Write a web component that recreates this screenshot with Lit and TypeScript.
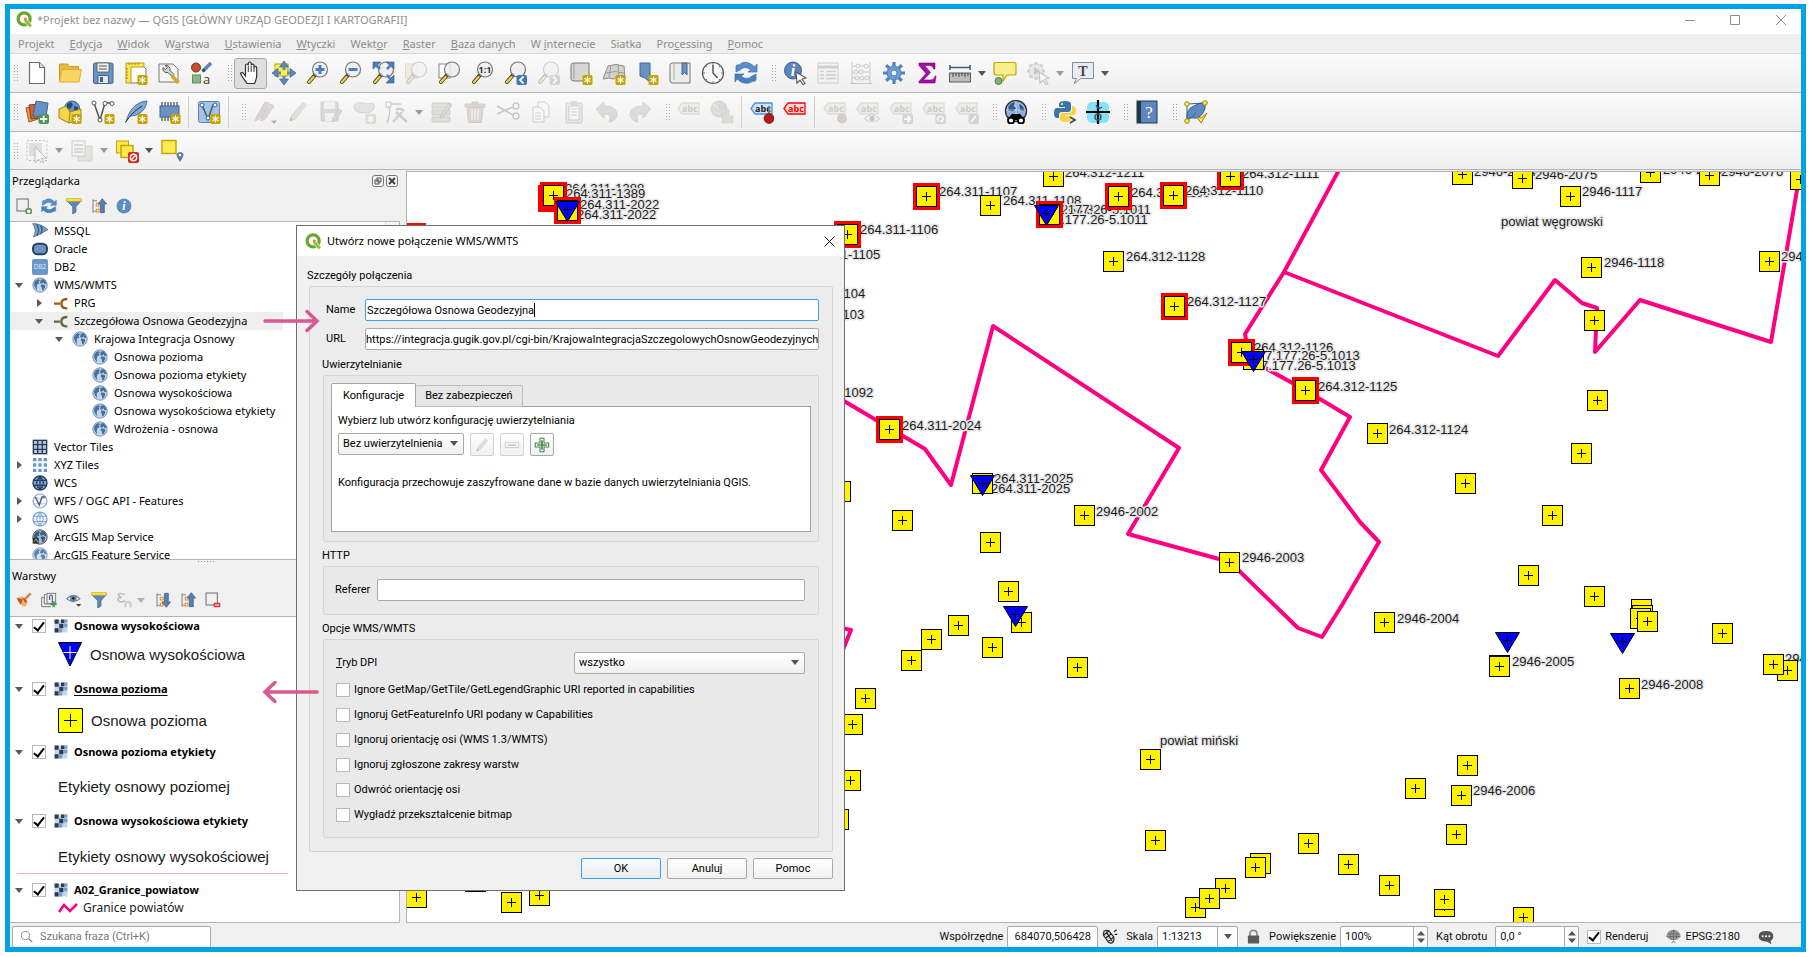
import { LitElement, html, svg, css, nothing, type TemplateResult } from "lit";
import { customElement, property } from "lit/decorators.js";
import { classMap } from "lit/directives/class-map.js";

/* ---------- shared icon fragments ---------- */

const badge = svg`<rect x="13.500" y="14" width="10" height="10" rx="1.500" fill="#c6a304"/>
  <path d="M18.500 15.500v7M15.500 17.200l6 3.600M21.500 17.200l-6 3.600" stroke="#fff" stroke-width="1.300"/>`;
const lens = (inner: unknown = nothing) => svg`
  <path d="M10 14 4 21" stroke="#3a3a3a" stroke-width="4" stroke-linecap="round"/>
  <path d="M8.500 16 4 21" stroke="#f2cf2c" stroke-width="2.400" stroke-linecap="round"/>
  <circle cx="15" cy="8.500" r="7.500" fill="#eeeeeecc" stroke="#777" stroke-width="1.200"/>${inner}`;
const tag = (fill = "#d9d9c2", line = "#a5a58f", ink = "#666") => svg`
  <path d="M1 8.500 5 3h17v11H5z" fill="${fill}" stroke="${line}" stroke-width="1.300"/>
  <text x="13" y="12" font-size="9" font-weight="700" font-family="Open Sans, sans-serif" text-anchor="middle" fill="${ink}">abc</text>`;
const smallBadge = (d: string, fill = "#8d8d8d") => svg`
  <rect x="13.500" y="14" width="10.500" height="10" rx="2" fill="${fill}"/><path d="${d}" stroke="#fff" stroke-width="1.800" fill="none"/>`;
const globe = (ocean: string, land: string, edge: string) => svg`
  <circle cx="12" cy="12" r="10.800" fill="${ocean}" stroke="${edge}" stroke-width="1.400"/>
  <path d="M3 9q2-5 7-6l2 2-2 2 1 3-3 1-1 4 1 5q-5-4-5-11zM13 4l4-1q4 3 5 7l-3 1-2-3-2 2-3-1zM14 11l5 1 1 3-3 5-2 0 0-4-2-2z" fill="${land}"/>`;
const pencil = svg`<path d="M4 21l1.500-5L17 2.500l3.500 2.500L9 19z" fill="#c9c48d" stroke="#77776b"/><path d="M17 2.500l3.500 2.500L9 19 6 17z" fill="#b3b092"/><path d="M4 21l1-3 2 1.500z" fill="#333"/>`;
const cursor = svg`<path d="M13 11l10 6-4 1 3 4.500-2 1.200-3-4.500-3 3z" fill="#fff" stroke="#555" stroke-width="1.100"/>`;

const ICONS: Record<string, TemplateResult<2>> = {
  new: svg`<path d="M4.500 1.500h10l5 5v16h-15z" fill="#fff" stroke="#6b6b6b" stroke-width="1.200"/><path d="M14.500 1.500v5h5" fill="#ddd" stroke="#6b6b6b"/>`,
  open: svg`<path d="M1.500 3h8l2 2.500h9V20h-19z" fill="#e9b93d" stroke="#c99a22"/><path d="M1.500 21 4 8.500h19.500L21 21z" fill="#fcd462" stroke="#e0b036"/>`,
  save: svg`<rect x="2.500" y="2" width="19.500" height="20.500" rx="1.500" fill="#6a93c4" stroke="#45678f"/><path d="M6 2h12v9H6z" fill="#f0f0f0" stroke="#555" stroke-width=".8"/><path d="M8 5h8M8 8h8" stroke="#555"/><path d="M7 14.500h10.500v8H7z" fill="#e8e8e8" stroke="#45678f"/><path d="M9 16h3v5H9z" fill="#3d5f8a"/>`,
  layout: svg`<path d="M6 4h12l4 4v14H6z" fill="#fff" stroke="#777"/><path d="M2 2h18v4H7v16H2z" fill="#fce94f" stroke="#c19a1f"/><path d="M5 2v2M8 2v2M11 2v2M14 2v2M2 8h2M2 11h2M2 14h2M2 17h2" stroke="#8f6f00" stroke-width=".8"/>${badge}`,
  wrench: svg`<path d="M2 3h14l5 5v13H2z" fill="#f5f5f5" stroke="#777"/><path d="M8 4.500a4 4 0 0 1 5 5l4 4-2 2-4-4a4 4 0 0 1-5-5l2.500 2 2-2z" fill="#d3d7cf" stroke="#555"/><path d="M15 15l6.500 7" stroke="#d8a827" stroke-width="3.500"/>`,
  style: svg`<circle cx="6" cy="6.500" r="4.500" fill="#c2522f" stroke="#7d2f16"/><path d="M13 10l8-8" stroke="#5a86b8" stroke-width="3.500"/><path d="M12.500 10.500l2-2" stroke="#26476d" stroke-width="2.500"/><rect x="2.500" y="14" width="8" height="8" fill="#8eb58c" stroke="#5f8c5d"/><text x="13" y="22.500" font-size="13" font-family="Open Sans, sans-serif" fill="#333">a</text>`,
  hand: svg`<path d="M8 22.500c-2-3-5-7-6.500-10 .7-1.500 2.600-1 3.500.5l1.500 2V4.500c0-2 2.700-2 2.800 0V2.500c0-2 2.800-2 2.900 0v2c0-1.800 2.700-1.800 2.800 0v2c.3-1.500 2.500-1.400 2.700.4V15c0 3-1.500 5-2 7.500z" fill="#fff" stroke="#333" stroke-width="1.200"/><path d="M9.300 5v6M12.200 5v6M15 6v5" stroke="#333"/>`,
  panAll: svg`<rect x="3" y="3" width="13" height="12" fill="#fcee50" stroke="#c4a000"/><path d="M12 0l4.500 6h-9zM12 24l4.500-6h-9zM0 12l6-4.500v9zM24 12l-6-4.500v9z" fill="#5b87bd" stroke="#3a628f" stroke-width=".7"/><path d="M12 5v4M12 15v4M5 12h4M15 12h4" stroke="#5b87bd" stroke-width="3"/>`,
  zoomIn: lens(svg`<path d="M15 4v9M10.500 8.500h9" stroke="#4a7dbb" stroke-width="3"/>`),
  zoomOut: lens(svg`<path d="M10.500 8.500h9" stroke="#4a7dbb" stroke-width="3"/>`),
  zoomFull: svg`${lens()}<path d="M2 1h8L2 8zM23 1h-8l8 7zM23 22v-8l-8 8z" fill="#4a7dbb" stroke="#33587f" stroke-width=".6"/><path d="M5 4l4 4M20 4l-4 4M20 19l-4-5" stroke="#4a7dbb" stroke-width="2.500"/>`,
  zoomSel: svg`<rect x="1.500" y="3" width="12" height="14" fill="#e6dc6b" stroke="#b0a64a"/>${lens()}`,
  zoomLayer: svg`<rect x="2" y="3" width="11" height="14" fill="#fff" stroke="#888"/>${lens()}`,
  zoom11: svg`${lens(svg`<text x="15" y="12" font-size="9" font-weight="700" font-family="Open Sans, sans-serif" text-anchor="middle" fill="#333">1:1</text>`)}`,
  zoomLast: svg`${lens()}${smallBadge("M20.500 15.500 17 19l3.500 3.500", "#4477ad")}`,
  zoomNext: svg`${lens()}${smallBadge("M17 15.500l3.500 3.500-3.500 3.500")}`,
  newMap: svg`<path d="M2 4.500q0-2.500 2.500-2.500H20v18H5q-3 0-3-2.500z" fill="#d7d7d2" stroke="#777"/><path d="M5 2v16" stroke="#999"/>${badge}`,
  new3d: svg`<path d="M1 18 6 5q8-3 16 0l1 12q-8-3-11 1-5-2-11 0z" fill="#d2d2ce" stroke="#8a8a86"/><path d="M4 12q9-3 18 0M9 4 7 16M16 4l1 12" stroke="#9b9b97" fill="none"/>${badge}`,
  bmNew: svg`<path d="M5 2h10v19l-5-4-5-2z" fill="#6a93c4" stroke="#3e6594"/>${badge}`,
  bms: svg`<path d="M2 4q0-2 2.500-2H22v20H5q-3 0-3-2z" fill="#ecece8" stroke="#777"/><path d="M6 2v17" stroke="#aaa"/><path d="M14 2h5v12l-2.500-2.500L14 14z" fill="#6a93c4" stroke="#3e6594"/>`,
  clock: svg`<circle cx="12" cy="12" r="10.500" fill="#fafafa" stroke="#555" stroke-width="1.200"/><path d="M12 4v8l4.500 5" stroke="#555" stroke-width="1.500" fill="none"/><path d="M12 2v2M12 20v2M2 12h2M20 12h2M5 5l1 1M19 5l-1 1M5 19l1-1M19 19l-1-1" stroke="#777"/>`,
  refresh: svg`<path d="M2 11V5q1-2 3-1Q10-1 17 3l4 3 2-3v8h-9l3-2q-6-5-11 0z" fill="#5a8fcb" stroke="#3d6ea5" stroke-width=".7"/><path d="M22 13v6q-1 2-3 1-5 4-12 1l-4-3-2 3v-8h9l-3 2q6 5 11 0z" fill="#4a80bf" stroke="#3d6ea5" stroke-width=".7"/>`,
  identify: svg`<circle cx="10" cy="9.500" r="8.500" fill="#5a86bd" stroke="#3a628f"/><text x="10" y="15" font-size="16" font-style="italic" font-weight="700" font-family="Liberation Serif, serif" text-anchor="middle" fill="#fff">i</text>${cursor}`,
  table: svg`<rect x="2" y="2" width="20" height="20" fill="#eee" stroke="#777"/><path d="M2 6h20" stroke="#777" stroke-width="3"/><path d="M4 10.500h4M10 10.500h10M4 14h4M10 14h10M4 17.500h4M10 17.500h10" stroke="#777" stroke-width="1.300"/>`,
  abacus: svg`<path d="M3 1v21M21 1v21M1 22.500h22M3 5h18M3 11h18M3 17h18" stroke="#666" fill="none"/><g fill="#eee" stroke="#666"><circle cx="9" cy="5" r="2"/><circle cx="17" cy="5" r="2"/><circle cx="7" cy="11" r="2"/><circle cx="12" cy="11" r="2"/><circle cx="8" cy="17" r="2"/><circle cx="13" cy="17" r="2"/><circle cx="18" cy="17" r="2"/></g>`,
  gear: svg`<path d="M12 1v22M1 12h22M4.200 4.200l15.600 15.600M19.800 4.200 4.200 19.800" stroke="#4f82bf" stroke-width="3.200"/><circle cx="12" cy="12" r="7" fill="#6d9bd1" stroke="#4f82bf"/><circle cx="12" cy="12" r="3" fill="#f4f4f4" stroke="#4f82bf"/>`,
  sigma: svg`<path d="M4 2h16v6h-1.500q-.5-3.500-4-3.500H9.500l6 7-7 7.500h7q4 0 4.500-4H21l-1 7H4v-1.500l7-8-7-8z" fill="#a50ba5" stroke="#7a057a" stroke-width=".6"/>`,
  ruler: svg`<path d="M2 4v5M22 4v5M2 6.500h20" stroke="#3a5f87" stroke-width="1.600"/><rect x="1.500" y="12" width="21" height="9" fill="#bdbdbd" stroke="#5c5c5c"/><path d="M5 12v4M8 12v3M11 12v4M14 12v3M17 12v4M20 12v3" stroke="#444"/>`,
  tip: svg`<path d="M3 1.500h18q2 0 2 2V12q0 2-2 2h-7l-4 6V14H3q-2 0-2-2V3.500q0-2 2-2z" fill="#f8ed8b" stroke="#c6a304" stroke-width="1.200"/><circle cx="5.500" cy="20" r="3.500" fill="#7fae7d" stroke="#4e7f4c"/>`,
  action: svg`<path d="M10 1v18M1 10h18M3.600 3.600l12.800 12.800M16.400 3.600 3.600 16.400" stroke="#777" stroke-width="3"/><circle cx="10" cy="10" r="7" fill="#ccc" stroke="#777"/><path d="M8 6l6 4-6 4z" fill="#555"/>${cursor}`,
  note: svg`<path d="M1.500 1.500h21v16H10l-7 5 2.500-5h-4z" fill="#e6edf2" stroke="#8a8f94"/><text x="12" y="14.500" font-size="14" font-family="Liberation Serif, serif" font-weight="700" text-anchor="middle" fill="#444">T</text>`,
  dataSrc: svg`<path d="M1 8l9-2 3 13-9 3z" fill="#e0a04a" stroke="#965e14"/><path d="M4 5l9-1 2 14-9 1z" fill="#cf5e3c" stroke="#8f3a1f"/><path d="M11 1l12 2-2 14-13-1z" fill="#6692c9" stroke="#3f6797"/>${smallBadge("M18.700 15.500v7M15.200 19h7", "#4f9457")}`,
  geopkg: svg`<circle cx="14" cy="8.500" r="7.500" fill="#6a93c4" stroke="#345a86"/><path d="M9 4l4-2 2 3-3 4-3-1zM16 6l4 1v4l-4-1z" fill="#254a75"/><path d="M1 9l7-3 4 6 11-3v10l-12 4L1 18z" fill="#f3d54a" stroke="#a58210"/><path d="M12 12l-1 11" stroke="#a58210"/>${badge}`,
  newShp: svg`<path d="M3 3l6 17L14 3h7" stroke="#555" stroke-width="1.500" fill="none"/><g fill="#fff" stroke="#555"><circle cx="3" cy="3" r="2"/><circle cx="9" cy="20" r="2"/><circle cx="14" cy="3.500" r="2"/><circle cx="21" cy="3.500" r="2"/></g>${badge}`,
  feather: svg`<path d="M2 22Q5 10 12 5q5-4 11-4-1 8-7 12-4 3-9 3" fill="#7ea6d6" stroke="#4a75a8"/><path d="M1.500 22.500Q8 12 18 6" stroke="#333" fill="none"/>${badge}`,
  memory: svg`<path d="M5 2v19M8 2v19M11 2v19M14 2v19M17 2v19M20 2v19" stroke="#222"/><rect x="3" y="6" width="19" height="11" fill="#6a93c4" stroke="#3a628f"/>${badge}`,
  virtual: svg`<rect x="1.500" y="1.500" width="21" height="21" rx="2" fill="#a8c3e2" stroke="#5b83b0"/><path d="M5 5l6 14 5-14h4" stroke="#3c5f88" stroke-width="1.600" fill="none"/><g fill="#fff" stroke="#3c5f88"><circle cx="5" cy="5" r="2"/><circle cx="11" cy="18" r="2"/><circle cx="18" cy="5" r="2"/></g>${badge}`,
  pencils: svg`<path d="M2 21l2-5L12 2l4 1L8 18z" fill="#a08f86" stroke="#777"/><path d="M8 21l1-4 8-13 4 2-9 13z" fill="#b08c86" stroke="#777"/><path d="M18 20.500h6L21 24z" fill="#222"/>`,
  pencil,
  saveEd: svg`<rect x="2" y="2" width="17" height="19" rx="1" fill="#9c9c9c" stroke="#777"/><path d="M5 2h11v7H5zM6 13h9v8H6z" fill="#e8e8e8"/><path d="M13 22l1-4 6-9 3 2-6 9z" fill="#b08c86" stroke="#777"/>`,
  addPoly: svg`<path d="M2 6q2-5 8-3t11 0q3 4 0 7t-7 3-8-1-4-6z" fill="#b9bfae" stroke="#888"/>${smallBadge("M18.500 15.500v7M15.500 17.200l6 3.600M21.500 17.200l-6 3.600", "#a8a070")}`,
  vertex: svg`<path d="M4 4h12M4 6q2 8-2 17" stroke="#666" stroke-width="1.400" fill="none"/><rect x="1" y="2" width="5" height="5" fill="#fff" stroke="#666"/><path d="M8 22l9-10M11 10q4-3 8 1M11 12l11 10" stroke="#777" stroke-width="2.500" fill="none"/>`,
  multiEd: svg`<path d="M2 3h18v5H2zM2 10h18v5H2zM2 17h18v5H2z" fill="#b5b58f" stroke="#777"/><path d="M10 18l1-4L19 3l3 2-8 11z" fill="#999" stroke="#666"/>`,
  trash: svg`<path d="M4 7h16l-1.500 15.500h-13zM2 4h20v3H2zM9 2h6v2H9z" fill="#b98f86" stroke="#8a6a64"/><path d="M9 9v11M12 9v11M15 9v11" stroke="#eee" stroke-width="1.300"/>`,
  cut: svg`<path d="M1 6l16 9M1 14l16-7" stroke="#666" stroke-width="1.800"/><circle cx="20" cy="6" r="3" fill="none" stroke="#666" stroke-width="1.600"/><circle cx="20" cy="16" r="3" fill="none" stroke="#666" stroke-width="1.600"/>`,
  copy: svg`<path d="M9 2h7l4 4v11H9z" fill="#fff" stroke="#777"/><path d="M4 7h7l4 4v11H4z" fill="#fff" stroke="#777"/><path d="M6 13h6M6 16h6M6 19h6" stroke="#777"/>`,
  paste: svg`<rect x="4" y="3" width="16" height="20" rx="1" fill="#ccc" stroke="#777"/><path d="M7 6h10v14H7z" fill="#fff" stroke="#777"/><path d="M9 1h6v4H9z" fill="#999"/><path d="M9 9h6M9 12h6M9 15h6" stroke="#777"/>`,
  undo: svg`<path d="M1 9l8-7v4q13 0 13 9-1 6-8 7 4-9-5-8v4z" fill="#c09a78" stroke="#9a7a5c"/>`,
  redo: svg`<path d="M23 9l-8-7v4Q2 6 2 15q1 6 8 7-4-9 5-8v4z" fill="#9aab94" stroke="#7c8c76"/>`,
  label: tag(),
  diagram: svg`<circle cx="9" cy="9" r="8" fill="#b9a08a" stroke="#888"/><path d="M9 9V1a8 8 0 0 1 8 8z" fill="#7c9a78"/><path d="M9 9 3 4" stroke="#eee"/><path d="M12 14h3v9h-3zM16 10h3v13h-3zM20 16h3v7h-3z" fill="#9fb39a" stroke="#777" stroke-width=".6"/>`,
  pinLabel: svg`${tag("#cfe3fa", "#4a90e2", "#222")}<path d="M19 6v12" stroke="#777" stroke-width="2"/><circle cx="19" cy="18.500" r="5" fill="#b01c1c" stroke="#7d1010" stroke-width=".7"/>`,
  redLabel: svg`${tag("#fdd", "#f00", "#f00")}`,
  pinLabel2: svg`${tag()}<circle cx="19" cy="18.500" r="5" fill="#a57070"/>`,
  eyeLabel: svg`${tag()}<path d="M8 18.500q7-7 16 0-8 7-16 0z" fill="#eee" stroke="#777"/><circle cx="16" cy="18.500" r="2.500" fill="#555"/>`,
  moveLabel: svg`${tag()}${smallBadge("M15 19h6M18.500 16l3 3-3 3")}`,
  rotLabel: svg`${tag()}${smallBadge("M16 21.500q-2-5 3-5 4 1 1 5l-2-1")}`,
  editLabel: svg`${tag()}${smallBadge("M16 22l5-6")}`,
  search: svg`<circle cx="12" cy="11" r="10.500" fill="#8bb0dc" stroke="#333" stroke-width="1.400"/><path d="M4 6q4-5 8-4l-2 4 3 2-4 4-5-1zM15 3q6 3 6 9l-5-1-1-4zM2 10h20M12 1v14" fill="#315a8c" stroke="#d6e3f2" stroke-width=".6"/><path d="M7 15q1-2 3-1h4q2-1 3 1l4 5H3z" fill="#000"/><circle cx="7" cy="20.500" r="3" fill="#fff" stroke="#000" stroke-width="1.800"/><circle cx="17" cy="20.500" r="3" fill="#fff" stroke="#000" stroke-width="1.800"/>`,
  python: svg`<path d="M12 1q-6 0-6 3v3h6v1H4q-3 0-3 5t3 5h2v-3q0-3 3-3h6q3 0 3-3V4q0-3-6-3z" fill="#3a75a8"/><path d="M12 22q6 0 6-3v-3h-6v-1h8q3 0 3-4t-3-5h-1v4q0 3-3 3h-6q-3 0-3 3v3q0 3 5 3z" fill="#fcd13f"/><circle cx="9" cy="4" r="1" fill="#fff"/><path d="M17 17l5 3-5 3" stroke="#444" stroke-width="1.600" fill="none"/>`,
  gugik: svg`<rect x="1" y="2" width="22" height="21" rx="5" fill="#84e3f6"/><path d="M12 0v24M0 12h24" stroke="#000" stroke-width="2.200"/><path d="M10 5q2 5 6 2M9 17q0-3 3-3t3 3-3 3-3-3z" stroke="#3a5a66" fill="none" stroke-width="1.500"/>`,
  help: svg`<rect x="2" y="1" width="20" height="22" fill="#5c88bd" stroke="#25364a"/><path d="M2 1h4v22H2z" fill="#25364a"/><text x="14" y="18" font-size="17" font-family="Liberation Serif, serif" text-anchor="middle" fill="#fff">?</text>`,
  topo: svg`<path d="M3 21Q2 8 10 6q6-4 11-3 1 6-2 10-4 6-9 5-5-1-7 3z" fill="#5e8bc2" stroke="#375f8f"/><path d="M3 4l18-1M3 4l0 17M3 21l9-8" stroke="#375f8f" fill="none"/><g fill="#fce94f" stroke="#9c8500"><circle cx="3" cy="4" r="2.300"/><circle cx="21" cy="3" r="2.300"/><circle cx="3" cy="21" r="2.300"/><path d="M13 17l4 6 6-10-6 5z"/></g>`,
  selRect: svg`<rect x="2" y="1.500" width="20" height="20" fill="none" stroke="#444" stroke-dasharray="2 2"/><rect x="4" y="4" width="13" height="13" fill="#b5b18f"/><path d="M10 8l11 11-5 .5 3 4-2 .8-3-4-4 3z" fill="#fff" stroke="#444"/>`,
  selForm: svg`<path d="M8 7h14v15H8z" fill="#c3bf96" stroke="#888"/><rect x="2" y="2" width="13" height="15" fill="#eee" stroke="#777"/><path d="M4 6h9M4 10h9M4 13h9" stroke="#777" stroke-width="1.500"/>`,
  desel: svg`<rect x="1.500" y="2" width="12" height="12" fill="#fce94f" stroke="#c4a000"/><rect x="6" y="6.500" width="12" height="12" fill="#fce94f" stroke="#c4a000" stroke-width="1.400"/><rect x="13" y="13" width="11" height="11" rx="2" fill="#d22"/><circle cx="18.500" cy="18.500" r="3.200" fill="none" stroke="#fff" stroke-width="1.400"/><path d="M16.500 20.500l4-4" stroke="#fff" stroke-width="1.400"/>`,
  selLoc: svg`<rect x="2" y="1.500" width="14" height="13" fill="#fcea4f" stroke="#c4a000" stroke-width="1.400"/><path d="M20 23q-4-6-3.500-8 3.500-4 7 0Q24 17 20 23z" fill="#5b7f97"/><circle cx="20" cy="16" r="1.300" fill="#fff"/>`,
  /* browser & layer panels */
  addLayer: svg`<rect x="1.500" y="1.500" width="17" height="18" fill="none" stroke="#777" stroke-width="1.600"/><circle cx="19" cy="20" r="4" fill="#f0f0f0" stroke="#5d9a60" stroke-width="2.500"/>`,
  filter: svg`<path d="M1 4h22l-8 9v8l-5 3V13z" fill="#5d87b8" stroke="#40658f"/><path d="M1 1h22v4H1z" fill="#fce94f" stroke="#c4a000"/>`,
  collapse: svg`<path d="M3 2v20M3 4h6M3 20h6" stroke="#888" stroke-width="1.600"/><path d="M8 8h4v4H8zM8 17h4v4H8z" fill="#fff" stroke="#ee8b1c" stroke-width="1.600"/><path d="M17 1l6.500 8H20v13h-6V9h-3.500z" fill="#5580b3" stroke="#33587f"/>`,
  expand: svg`<path d="M3 2v20M3 4h6M3 20h6" stroke="#888" stroke-width="1.600"/><path d="M8 8h4v4H8zM8 17h4v4H8z" fill="#fff" stroke="#ee8b1c" stroke-width="1.600"/><path d="M17 23l6.500-8H20V2h-6v13h-3.500z" fill="#5580b3" stroke="#33587f"/>`,
  info: svg`<circle cx="12" cy="12" r="10.500" fill="#5d8bc4" stroke="#3f6ba2"/><text x="12" y="18" font-size="18" font-style="italic" font-weight="700" font-family="Liberation Serif, serif" text-anchor="middle" fill="#fff">i</text>`,
  brush: svg`<path d="M13 11 22 2" stroke="#c98a4b" stroke-width="4"/><path d="M1 9l6-2 11 8-4 7Q5 21 1 9z" fill="#f0b050"/><path d="M1 9l9 2-3 8zM8 6l9 8-3 2z" fill="#d6452e"/>`,
  group: svg`<path d="M4 8H1v14h14M8 4H5v14h14" fill="none" stroke="#777" stroke-width="1.500"/><rect x="9" y="2" width="13" height="15" fill="#eee" stroke="#777" stroke-width="1.400"/><path d="M13 12V6q2-3 4 0v14" fill="none" stroke="#40658f" stroke-width="1.700"/><path d="M19 14v9M14.500 18.500h9" stroke="#4f9457" stroke-width="3"/>`,
  eye: svg`<path d="M1 10q10-10 20 0-10 9-20 0z" fill="#eee" stroke="#777" stroke-width="1.600"/><circle cx="11" cy="9.500" r="5" fill="#5d87b8"/><circle cx="11" cy="9.500" r="2" fill="#222"/><path d="M15 18h8l-4 4z" fill="#444"/>`,
  epsilon: svg`<path d="M13 4Q3 0 4 5q1 3 5 3-7 0-6 4 1 5 11 1" fill="none" stroke="#777" stroke-width="2.500"/><path d="M14 23v-6q4-5 8 0v6" fill="none" stroke="#999" stroke-width="3"/>`,
  remove: svg`<rect x="1.500" y="1.500" width="17" height="18" fill="none" stroke="#777" stroke-width="1.600"/><rect x="13" y="16" width="10" height="7" rx="1.500" fill="#e0343f"/><path d="M15 19.500h6" stroke="#fff" stroke-width="1.600"/>`,
  mssql: svg`<path d="M1 1q11-1 23 9-8 5-22 11 6-10-1-20z" fill="#7ba0cc" stroke="#33587f"/><path d="M7 2q6 9 0 17M13 4q4 7 0 13" stroke="#33587f" stroke-width="2" fill="none"/>`,
  oracle: svg`<rect x="1.500" y="4" width="21" height="16" rx="7" fill="#6a93c4" stroke="#24405f" stroke-width="3"/>`,
  db2: svg`<rect width="24" height="24" rx="3" fill="#6d97c8"/><text x="12" y="15.500" font-size="9.500" font-family="Open Sans, sans-serif" text-anchor="middle" fill="#dfeaf6">DB2</text>`,
  globe: globe("#c2d4ea", "#4a6f9c", "#6d8fb8"),
  conn: svg`<path d="M1 12h9M21 5q-9 0-9 7t9 7" transform="translate(2 1)" fill="none" stroke="#9a5f12" stroke-width="3.600"/>`,
  connGrey: svg`<path d="M1 12h9M21 5q-9 0-9 7t9 7" transform="translate(2 1)" fill="none" stroke="#66664a" stroke-width="3.600"/>`,
  vtiles: svg`<rect x="2" y="2" width="20" height="20" fill="#a9c3e2" stroke="#2b3b4d" stroke-width="2"/><path d="M8.500 2v20M15.500 2v20M2 8.500h20M2 15.500h20" stroke="#2b3b4d" stroke-width="2"/>`,
  xyz: svg`<path d="M1.500 1.500h5v5h-5zM9.500 1.500h5v5h-5zM17.500 1.500h5v5h-5zM1.500 9.500h5v5h-5zM9.500 9.500h5v5h-5zM17.500 9.500h5v5h-5zM1.500 17.500h5v5h-5zM9.500 17.500h5v5h-5zM17.500 17.500h5v5h-5z" fill="#6a97cf"/>`,
  wcs: svg`<circle cx="12" cy="12" r="10.500" fill="#7ba0cc" stroke="#23405f" stroke-width="2"/><path d="M2 8h20M2 15.500h20M12 2v20M12 2q-10 10 0 20M12 2q10 10 0 20" fill="none" stroke="#23405f" stroke-width="1.700"/>`,
  wfs: svg`<circle cx="12" cy="12" r="10.500" fill="#f2f6fb" stroke="#88a9cf" stroke-width="1.800"/><path d="M2 8h20M2 16h20" stroke="#a6c0de"/><path d="M5 6l6 12 4-12h5" fill="none" stroke="#555" stroke-width="2"/>`,
  ows: svg`<circle cx="12" cy="12" r="10.500" fill="#f2f6fb" stroke="#6f97c6" stroke-width="1.800"/><path d="M2 8h20M2 16h20M12 2v20M12 2q-10 10 0 20M12 2q10 10 0 20" fill="none" stroke="#6f97c6" stroke-width="1.300"/>`,
  arcmap: svg`${globe("#9fb9d6", "#3d5a7c", "#555")}<path d="M1 13h9v9H1z" fill="#333"/><path d="M3 19l3-4 3 5" stroke="#ddd" fill="none"/>`,
  arcfeat: svg`${globe("#d8e4f1", "#5a82b2", "#7c9cc0")}<path d="M2 18h7v5H2z" fill="#333"/>`,
  raster: svg`<rect x="1" y="1" width="22" height="22" fill="#c5d7eb"/><path d="M1 1h7v7H1zM12 1h6v6h-6zM9 8h7v8H9zM1 16h7v7H1z" fill="#2b3b52"/><path d="M16 8h7v6h-7zM8 16h6v7H8zM18 1h5v5h-5z" fill="#7d9cc4"/>`,
  plus: svg`<path d="M9 2h6v7h7v6h-7v7H9v-7H2V9h7z" fill="#fff" stroke="#3f8a4c" stroke-width="1.600"/><path d="M12 5v14M5 12h14" stroke="#3f8a4c" stroke-width="2.500"/>`,
  minus: svg`<rect x="2" y="8" width="20" height="8" fill="#fff" stroke="#b36a6a" stroke-width="1.500"/><path d="M5 12h14" stroke="#b36a6a" stroke-width="2.500"/>`,
  logo: svg`<circle cx="11.500" cy="11" r="8.500" fill="none" stroke="#6ba52f" stroke-width="4.600"/><path d="M12 12.500l4-.5 7 8.500-3.500 3-8-8z" fill="#8fc04a" stroke="#fff"/><path d="M11.500 10l4 .5-3 3.500z" fill="#ee7913" stroke="#ee7913"/>`,
  find: svg`<circle cx="10" cy="10" r="7.500" fill="none" stroke="#777" stroke-width="1.500"/><path d="M15.500 15.500l7 7" stroke="#777" stroke-width="2"/>`,
  mouse: svg`<path d="M3 3q5-3 9 2l5 6q3 6-2 10-5 1-8-5L2 9z" fill="#ddd" stroke="#222" stroke-width="1.600"/><path d="M3 9l8-7M6 13l8-6M10 18l8-6M6 4l9 14M18 4l4-3M19 8h4" stroke="#222" stroke-width="1.800"/>`,
  lock: svg`<path d="M6.500 11V7q0-5 5.500-5t5.500 5v4" fill="none" stroke="#8b8b8b" stroke-width="2.800"/><rect x="3" y="10.500" width="18" height="12.500" rx="1" fill="#5b5b5b"/>`,
  crs: svg`<path d="M1 12Q3 2 12 2t11 10q-4 5-11 5T1 12z" fill="#a0a0a0" stroke="#777"/><path d="M3 8h18M2 12h20M12 2v16M12 2Q3 9 9 17M12 2q9 7 3 15M9 22q3-4 6 0" fill="none" stroke="#666" stroke-width="1.400"/>`,
  bubble: svg`<path d="M12 3q11 0 11 8 0 5-4 7l1 5-6-4q-13 0-13-8t11-8z" fill="#555"/><circle cx="7" cy="11" r="1.500" fill="#fff"/><circle cx="12" cy="11" r="1.500" fill="#fff"/><circle cx="17" cy="11" r="1.500" fill="#fff"/>`,
};

const icon = (name: string, size = 24) =>
  html`<svg class="ico" width=${size} height=${size} viewBox="0 0 24 24" aria-hidden="true">${ICONS[name]}</svg>`;
const caretDown = html`<svg class="ico" width="8" height="5" viewBox="0 0 8 5" aria-hidden="true"><path d="M0 0h8L4 5z" fill="currentColor"/></svg>`;
const caretRight = html`<svg class="ico" width="5" height="8" viewBox="0 0 5 8" aria-hidden="true"><path d="M0 0v8l5-4z" fill="currentColor"/></svg>`;

const controls = css`
  :host, * { box-sizing: border-box; }
  .ico { display: block; flex: none; }
  button, input, select { font: inherit; color: inherit; margin: 0; outline: none; }
  button { display: flex; align-items: center; justify-content: center; border: 0; padding: 0; background: none; }
  .text { height: 22px; min-width: 0; border: 1px solid #a9a9a9; border-radius: 2px; background: #fff; padding: 0 4px; }
  .check { appearance: none; flex: none; display: grid; place-items: center; width: 14px; height: 14px; border: 1px solid #b8b8b8; background: #fff; }
  .check:checked::before { content: ""; width: 4px; height: 9px; border: solid #000; border-width: 0 2px 2px 0; transform: rotate(38deg); margin-top: -2px; }
  .combo { position: relative; display: flex; color: #000; }
  .combo select { flex: 1; min-width: 0; height: 22px; appearance: none; border: 1px solid #a9a9a9; border-radius: 2px; padding: 0 20px 0 4px; background: linear-gradient(#fff, #f0f0f0); }
  .combo .ico { position: absolute; right: 6px; top: 8px; color: #555; pointer-events: none; }
`;

/* ---------- toolbars ---------- */

/* "|" grip, "," separator, trailing "!" disabled, "*" pressed, "v" drop-down marker */
const BARS = [
  "| new open save layout wrench style | hand* panAll zoomIn zoomOut zoomFull zoomSel! zoomLayer zoom11 zoomLast zoomNext! newMap new3d bmNew bms clock refresh | identify table! abacus! gear sigma ruler v tip action! v! note v",
  "| dataSrc geopkg newShp feather memory , virtual , | pencils! pencil! saveEd! addPoly! vertex! v! multiEd! trash! cut! copy! paste! undo! redo! | label! diagram! , pinLabel redLabel , pinLabel2! eyeLabel! moveLabel! rotLabel! editLabel! | search | python gugik | help | topo",
  "| selRect! v! selForm! v! desel v selLoc",
];

@customElement("tool-bar")
class ToolBar extends LitElement {
  @property() items = "";
  static styles = [controls, css`
    :host { display: flex; align-items: center; border-bottom: 1px solid #b4b4b4; background: linear-gradient(#fafafa, #efefef); }
    .tool { width: 33px; height: 31px; }
    .tool.on { border: 1px solid #a8a8a8; border-radius: 3px; background: #dedede; }
    .tool:disabled .ico { opacity: .3; filter: grayscale(.5); }
    .drop { width: 12px; height: 31px; color: #555; }
    .drop:disabled { color: #999; }
    .grip { width: 6px; height: 18px; margin: 0 1px 0 9px; background: radial-gradient(#a6a6a6 1px, transparent 1px) 0 0 / 3px 3px; }
    .grip:first-child { margin: 0 1px 0 3px; }
    .rule { width: 1px; height: 32px; margin: 0 3px; background: #cfcfcf; }
  `];
  render() {
    return this.items.split(" ").map((token) => {
      if (token === "|") return html`<span class="grip"></span>`;
      if (token === ",") return html`<span class="rule"></span>`;
      const name = token.replace(/[!*]/, "");
      const off = token.endsWith("!");
      return name === "v"
        ? html`<button class="drop" aria-label="menu" ?disabled=${off}>${caretDown}</button>`
        : html`<button class=${classMap({ tool: true, on: token.endsWith("*") })} aria-label=${name} ?disabled=${off}>${icon(name)}</button>`;
    });
  }
}

/* ---------- left dock ---------- */

type Node = { level: number; icon: string; text: string; open?: boolean; current?: boolean };
const TREE: Node[] = [
  { level: 0, icon: "mssql", text: "MSSQL" },
  { level: 0, icon: "oracle", text: "Oracle" },
  { level: 0, icon: "db2", text: "DB2" },
  { level: 0, icon: "globe", text: "WMS/WMTS", open: true },
  { level: 1, icon: "conn", text: "PRG", open: false },
  { level: 1, icon: "connGrey", text: "Szczegółowa Osnowa Geodezyjna", open: true, current: true },
  { level: 2, icon: "globe", text: "Krajowa Integracja Osnowy", open: true },
  { level: 3, icon: "globe", text: "Osnowa pozioma" },
  { level: 3, icon: "globe", text: "Osnowa pozioma etykiety" },
  { level: 3, icon: "globe", text: "Osnowa wysokościowa" },
  { level: 3, icon: "globe", text: "Osnowa wysokościowa etykiety" },
  { level: 3, icon: "globe", text: "Wdrożenia - osnowa" },
  { level: 0, icon: "vtiles", text: "Vector Tiles" },
  { level: 0, icon: "xyz", text: "XYZ Tiles", open: false },
  { level: 0, icon: "wcs", text: "WCS" },
  { level: 0, icon: "wfs", text: "WFS / OGC API - Features", open: false },
  { level: 0, icon: "ows", text: "OWS", open: false },
  { level: 0, icon: "arcmap", text: "ArcGIS Map Service" },
  { level: 0, icon: "arcfeat", text: "ArcGIS Feature Service" },
];

@customElement("side-dock")
class SideDock extends LitElement {
  static styles = [controls, css`
    :host { display: flex; flex-direction: column; min-height: 0; font: 11px/18px "Noto Sans", sans-serif; color: #000; }
    .head { display: flex; align-items: center; height: 22px; padding: 0 2px; gap: 2px; }
    .head.low { height: 20px; }
    h2 { flex: 1; margin: 0; font: inherit; }
    .tools { display: flex; align-items: center; height: 29px; padding: 0 0 2px 6px; gap: 9px; }
    .tools.low { height: 30px; }
    .tools button { width: 16px; height: 24px; }
    .tools button:disabled { opacity: .4; }
    .tools .slim { width: 8px; margin: 0 1px 0 -4px; color: #555; }
    .box { overflow: hidden; border: 1px solid #b4b4b4; border-left: 0; background: #fff; }
    .tree { flex: 0 0 339px; position: relative; }
    .bar { position: absolute; right: 0; top: 0; bottom: 0; width: 14px; border-left: 1px solid #d4d4d4; background: #f7f7f7; }
    .row { display: flex; align-items: center; height: 18px; }
    .row.current { width: 273px; background: #efefef; }
    .pad { width: calc(var(--level) * 20px); }
    .twist { display: grid; place-items: center; width: 18px; margin-right: 4px; color: #5a5a5a; }
    .row span.name { margin-left: 6px; white-space: nowrap; }
    .split { display: flex; justify-content: center; height: 6px; flex: none; }
    .split i { width: 17px; height: 3px; background: radial-gradient(#999 1px, transparent 1px) 0 0 / 3px 3px; }
    .layers { flex: 1; min-height: 0; }
    .layer { display: flex; align-items: center; height: 18px; font-weight: 700; }
    .layer .check + .ico { margin-left: 8px; }
    .layer label { margin-left: 6px; }
    .active label { text-decoration: underline; text-underline-offset: 2px; }
    .legend { display: flex; align-items: center; gap: 8px; height: 45px; padding-left: 48px; font: 15px/18px "Liberation Sans", sans-serif; color: #1a1a1a; }
    .legend.upper { padding-bottom: 6px; }
    .legend.wide { height: 51px; }
    .legend.tail { height: 43px; padding-top: 10px; }
    .legend.line { height: 18px; gap: 5px; font: 12px/18px "Noto Sans", sans-serif; }
    hr { width: 271px; margin: 0 0 7px 7px; border: 0; height: 1px; background: #ffa6c9; }
  `];
  layer(id: string, text: string, active = false) {
    return html`<div class=${classMap({ layer: true, active })}>
      <span class="twist">${caretDown}</span><input class="check" type="checkbox" id=${id} checked />${icon("raster", 14)}<label for=${id}>${text}</label>
    </div>`;
  }
  render() {
    return html`
      <div class="head"><h2>Przeglądarka</h2>
        <button aria-label="Odepnij"><svg class="ico" width="12" height="12" viewBox="0 0 12 12"><rect x=".5" y=".5" width="11" height="11" rx="2" fill="none" stroke="#777"/><path d="M5 3h4v4H5zM3 5h4v4H3z" fill="#f0f0f0" stroke="#555"/></svg></button>
        <button aria-label="Zamknij"><svg class="ico" width="12" height="12" viewBox="0 0 12 12"><rect x=".5" y=".5" width="11" height="11" rx="2" fill="none" stroke="#777"/><path d="M3 3l6 6M9 3l-6 6" stroke="#444" stroke-width="2"/></svg></button>
      </div>
      <div class="tools">
        ${["addLayer", "refresh", "filter", "collapse", "info"].map((n) => html`<button aria-label=${n}>${icon(n, 16)}</button>`)}
      </div>
      <div class="box tree">
        ${TREE.map((n) => html`<div class=${classMap({ row: true, current: !!n.current })}>
          <span class="pad" style="--level:${n.level}"></span>
          <span class="twist">${n.open === undefined ? nothing : n.open ? caretDown : caretRight}</span>
          ${icon(n.icon, 16)}<span class="name">${n.text}</span></div>`)}
        <span class="bar"></span>
      </div>
      <div class="split"><i></i></div>
      <div class="head low"><h2>Warstwy</h2></div>
      <div class="tools low">
        ${["brush", "group", "eye", "filter"].map((n) => html`<button aria-label=${n}>${icon(n, 16)}</button>`)}
        <button aria-label="epsilon" disabled>${icon("epsilon", 16)}</button>
        <button class="slim" aria-label="menu" disabled>${caretDown}</button>
        ${["expand", "collapse", "remove"].map((n) => html`<button aria-label=${n}>${icon(n, 16)}</button>`)}
      </div>
      <div class="box layers">
        ${this.layer("l1", "Osnowa wysokościowa")}
        <div class="legend upper"><svg class="ico" width="24" height="25" viewBox="0 0 24 25"><path d="M.5.5h23L12 24z" fill="#00f" stroke="#000"/><path d="M12 4v13M5.500 10.500h13" stroke="#fff"/></svg>Osnowa wysokościowa</div>
        ${this.layer("l2", "Osnowa pozioma", true)}
        <div class="legend"><svg class="ico" width="25" height="25" viewBox="0 0 25 25"><path d="M.5.5h24v24H.5z" fill="#ff0" stroke="#000"/><path d="M12.500 6v13M6 12.500h13" stroke="#000"/></svg>Osnowa pozioma</div>
        ${this.layer("l3", "Osnowa pozioma etykiety")}
        <div class="legend wide">Etykiety osnowy poziomej</div>
        ${this.layer("l4", "Osnowa wysokościowa etykiety")}
        <div class="legend tail">Etykiety osnowy wysokościowej</div>
        <hr />
        ${this.layer("l5", "A02_Granice_powiatow")}
        <div class="legend line"><svg class="ico" width="20" height="12" viewBox="0 0 20 12"><path d="M1 10l5-7 6 6 7-7" fill="none" stroke="#ff0080" stroke-width="2.500"/></svg>Granice powiatów</div>
      </div>`;
  }
}

/* ---------- map canvas ---------- */

/* marker: x, y, selected */
const MARKS: [number, number, number?][] = [
  [412, 236, 1], [551, 198, 1], [553, 195, 1], [567, 210, 1], [847, 234, 1], [926, 196, 1], [1049, 214, 1], [1118, 196, 1], [1173, 195, 1], [1230, 176, 1],
  [1174, 306, 1], [1253, 359], [1241, 352, 1], [1305, 390, 1], [889, 429, 1],
  [1053, 176], [990, 205], [1113, 261], [982, 483], [840, 491], [902, 520], [990, 542], [1084, 515], [1229, 562],
  [1462, 174], [1522, 178], [1570, 196], [1650, 172], [1709, 175], [1800, 179], [1591, 267], [1769, 261], [1594, 320], [1597, 400], [1377, 433], [1581, 453], [1465, 483], [1552, 515],
  [1008, 591], [1021, 622], [958, 625], [931, 639], [992, 647], [911, 660], [1077, 667], [865, 698], [852, 724], [850, 780], [838, 819], [1150, 759], [1155, 840], [1308, 843],
  [1260, 863], [1255, 867], [1195, 907], [1225, 888], [1209, 898],
  [1528, 575], [1594, 596], [1641, 609], [1642, 615], [1640, 618], [1647, 621], [1384, 622], [1722, 633], [1787, 670], [1773, 664], [1499, 665], [1499, 666], [1629, 688], [1467, 765], [1415, 788], [1461, 795], [1456, 834],
  [1348, 864], [1389, 885], [1444, 906], [1444, 899], [1523, 917], [416, 897], [475, 881], [511, 902], [539, 895],
];
const PEAKS: [number, number][] = [[567, 209], [1046, 213], [1253, 359], [982, 483], [1015, 614], [1507, 640], [1622, 641]];
const LABELS: [number, number, string][] = [
  [565, 193, "264.311-1388"], [566, 198, "264.311-1389"], [580, 209, "264.311-2022"], [577, 219, "264.311-2022"],
  [860, 234, "264.311-1106"], [802, 259, "264.311-1105"], [787, 298, "264.311-1104"], [786, 319, "264.311-1103"], [794, 397, "264.311-1092"],
  [939, 196, "264.311-1107"], [1003, 205, "264.311-1108"], [1061, 214, "264.311-1010"], [1057, 214, "7.177.26-5.1011"], [1054, 224, "7.177.26-5.1011"],
  [1065, 177, "264.312-1211"], [1131, 197, "264.312-1109"], [1185, 195, "264.312-1110"], [1242, 178, "264.312-1111"],
  [1126, 261, "264.312-1128"], [1187, 306, "264.312-1127"], [1254, 352, "264.312-1126"], [1265, 360, "7.177.26-5.1013"], [1261, 370, "7.177.26-5.1013"],
  [1318, 391, "264.312-1125"], [1389, 434, "264.312-1124"], [902, 430, "264.311-2024"], [994, 483, "264.311-2025"], [991, 493, "264.311-2025"],
  [1096, 516, "2946-2002"], [1242, 562, "2946-2003"], [1474, 176, "2946-2074"], [1535, 179, "2946-2075"], [1582, 196, "2946-1117"], [1663, 174, "2946-2077"], [1721, 176, "2946-2076"],
  [1604, 267, "2946-1118"], [1781, 261, "2946-1119"], [1397, 623, "2946-2004"], [1512, 666, "2946-2005"], [1641, 689, "2946-2008"], [1473, 795, "2946-2006"], [1785, 663, "2946-2007"],
  [1501, 226, "powiat węgrowski"], [1160, 745, "powiat miński"],
];
const BORDERS = [
  "1339,170 1284,272 1245,334 1247,345 1253,359 1267,369 1305,390 1350,417 1321,470 1360,522 1379,542 1342,605 1322,637 1298,628 1230,562 1128,534 1179,448 993,326 951,485 925,449 844,401 800,376",
  "1284,272 1498,356 1555,280 1582,303 1597,308 1595,352 1640,300 1771,342 1797,190 1799,170",
  "820,623 851,630 840,657",
];

@customElement("map-view")
class MapView extends LitElement {
  static styles = css`
    :host { display: block; position: relative; overflow: hidden; box-sizing: border-box; border: solid #b4b4b4; border-width: 1px 0 1px 1px; background: #fff; }
    .canvas { position: absolute; inset: 0; width: 100%; height: 100%; }
    .edge { fill: none; stroke: #ff0080; stroke-width: 4; stroke-linejoin: round; }
    .name { font: 13px "Liberation Sans", sans-serif; fill: #1c1c1c; stroke: #e6e6e6; stroke-width: 3; stroke-linejoin: round; paint-order: stroke; }
    .mark { fill: #fff200; stroke: #000; }
    .picked { fill: none; stroke: #f00; stroke-width: 3; }
    .peak { fill: #00f; stroke: #000; }
    .cross { stroke: #000; }
  `;
  render() {
    return html`<svg class="canvas" role="img" aria-label="Mapa">
      <g transform="translate(-407 -172)">
        ${BORDERS.map((p) => svg`<polyline class="edge" points=${p} />`)}
        ${LABELS.map(([x, y, t]) => svg`<text class="name" x=${x} y=${y}>${t}</text>`)}
        ${MARKS.map(([x, y, on]) => svg`<g transform="translate(${x + 0.5} ${y + 0.5})">
          ${on ? svg`<rect class="picked" x="-12" y="-12" width="24" height="24" />` : nothing}
          <rect class="mark" x="-10" y="-10" width="20" height="20" /><path class="cross" d="M-4.500 0h9M0-4.500v9" /></g>`)}
        ${PEAKS.map(([x, y]) => svg`<g transform="translate(${x + 0.5} ${y + 0.5})">
          <path class="peak" d="M-12-8h24L0 12z" /><path class="cross" d="M-4.500 0h9M0-4.500v9" /></g>`)}
      </g>
    </svg>`;
  }
}

/* ---------- connection dialog ---------- */

const OPTIONS = [
  "Ignore GetMap/GetTile/GetLegendGraphic URI reported in capabilities",
  "Ignoruj GetFeatureInfo URI podany w Capabilities",
  "Ignoruj orientację osi (WMS 1.3/WMTS)",
  "Ignoruj zgłoszone zakresy warstw",
  "Odwróć orientację osi",
  "Wygładź przekształcenie bitmap",
];

@customElement("wms-dialog")
class WmsDialog extends LitElement {
  static styles = [controls, css`
    :host { display: block; border: 1px solid #6e6e6e; background: #f0f0f0; font: 11px/14px Roboto, sans-serif; color: #000; }
    .title { display: flex; align-items: center; gap: 5px; height: 30px; padding: 0 9px 0 8px; background: #fff; font: 11px/18px "Noto Sans", sans-serif; }
    .title h1 { flex: 1; margin: 0; font: inherit; }
    .body { padding: 13px 11px 11px; }
    .cap { margin: 0 0 3px -1px; }
    .group { border: 1px solid #d6d6d6; border-radius: 2px; background: #ececec; }
    .group .group { background: #e9e9e9; }
    .outer { margin-left: 1px; padding: 12px 13px 13px; }
    .field { display: grid; grid-template-columns: 39px 1fr; align-items: center; padding-left: 3px; margin-bottom: 7px; }
    .field .text { padding: 0; width: 100%; }
    .field .focus { border-color: #3f9fe6; padding: 0 1px; }
    .entry { position: relative; display: flex; }
    .caret { position: absolute; left: 169px; top: 4px; width: 1px; height: 14px; background: #000; }
    .auth { padding: 7px 7px 9px; margin-bottom: 7px; }
    .first { margin-top: 8px; }
    .tabs { display: flex; align-items: flex-end; height: 24px; margin-bottom: -1px; position: relative; }
    .tab { height: 22px; padding: 0 9px; border: 1px solid #bcbcbc; border-left: 0; border-radius: 2px 2px 0 0; background: #e6e6e6; }
    .tab.on { height: 24px; padding: 0 11px; border: 1px solid #a6a6a6; border-bottom: 0; background: #fff; }
    .pane { min-height: 126px; padding: 7px 6px; border: 1px solid #a0a0a0; background: #fff; }
    .pane p { margin: 0; }
    .picker { display: flex; gap: 6px; margin: 5px 0 20px; }
    .picker .combo { width: 126px; }
    .square { width: 24px; height: 23px; border: 1px solid #a9a9a9; border-radius: 2px; background: linear-gradient(#fff, #f0f0f0); }
    .square:disabled { border-color: #d0d0d0; }
    .square:disabled .ico { opacity: .35; }
    .http { display: flex; align-items: center; gap: 7px; padding: 12px 13px 13px 11px; margin-bottom: 7px; }
    .http .text { flex: 1; }
    .options { padding: 12px 13px 10px 12px; }
    .dpi { display: flex; align-items: center; justify-content: space-between; margin-bottom: 3px; }
    .dpi .combo { width: 231px; }
    .option { display: flex; align-items: center; gap: 4px; height: 25px; }
    .foot { display: flex; justify-content: flex-end; gap: 6px; margin-top: 6px; }
    .push { width: 80px; height: 21px; border: 1px solid #a9a9a9; border-radius: 2px; background: linear-gradient(#fff, #f0f0f0); }
    .push.main { border-color: #3f9fe6; background: linear-gradient(#fbfcfd, #e6edf4); }
  `];
  render() {
    return html`
      <header class="title">${icon("logo", 17)}<h1>Utwórz nowe połączenie WMS/WMTS</h1>
        <button aria-label="Zamknij"><svg class="ico" width="11" height="11" viewBox="0 0 11 11"><path d="M.5.5l10 10M10.500.5l-10 10" stroke="#111"/></svg></button>
      </header>
      <div class="body">
        <div class="cap">Szczegóły połączenia</div>
        <div class="group outer">
          <div class="field"><label for="name">Name</label><span class="entry"><input id="name" class="text focus" .value=${"Szczegółowa Osnowa Geodezyjna"} /><i class="caret"></i></span></div>
          <div class="field"><label for="url">URL</label><input id="url" class="text" .value=${"https://integracja.gugik.gov.pl/cgi-bin/KrajowaIntegracjaSzczegolowychOsnowGeodezyjnych"} /></div>
          <div class="cap first">Uwierzytelnianie</div>
          <div class="group auth">
            <div class="tabs" role="tablist"><button class="tab on" role="tab" aria-selected="true">Konfiguracje</button><button class="tab" role="tab">Bez zabezpieczeń</button></div>
            <div class="pane">
              <p>Wybierz lub utwórz konfigurację uwierzytelniania</p>
              <div class="picker">
                <span class="combo"><select aria-label="Konfiguracja uwierzytelniania"><option>Bez uwierzytelnienia</option></select>${caretDown}</span>
                <button class="square" aria-label="Edytuj" disabled>${icon("pencil", 16)}</button>
                <button class="square" aria-label="Usuń" disabled>${icon("minus", 16)}</button>
                <button class="square" aria-label="Dodaj">${icon("plus", 16)}</button>
              </div>
              <p>Konfiguracja przechowuje zaszyfrowane dane w bazie danych uwierzytelniania QGIS.</p>
            </div>
          </div>
          <div class="cap">HTTP</div>
          <div class="group http"><label for="ref">Referer</label><input id="ref" class="text" /></div>
          <div class="cap">Opcje WMS/WMTS</div>
          <div class="group options">
            <div class="dpi"><label for="dpi"><u>T</u>ryb DPI</label><span class="combo"><select id="dpi"><option>wszystko</option></select>${caretDown}</span></div>
            ${OPTIONS.map((text) => html`<label class="option"><input class="check" type="checkbox" />${text}</label>`)}
          </div>
        </div>
        <div class="foot"><button class="push main">OK</button><button class="push">Anuluj</button><button class="push">Pomoc</button></div>
      </div>`;
  }
}

/* ---------- main window ---------- */

const MENU = ["Projekt", "_Edycja", "_Widok", "W_arstwa", "_Ustawienia", "_Wtyczki", "Wekt_or", "_Raster", "_Baza danych", "W _internecie", "Siatka", "Pro_cessing", "_Pomoc"];
const spin = html`<span class="spin"><svg class="ico" width="8" height="12" viewBox="0 0 8 12" aria-hidden="true"><path d="M0 4.500h8L4 0zM0 7.500h8L4 12z" fill="#555"/></svg></span>`;

@customElement("app-root")
class AppRoot extends LitElement {
  static styles = [controls, css`
    :host { display: block; height: 100vh; padding: 4px 4px 5px 5px; background: #fff; }
    .window { position: relative; display: flex; flex-direction: column; height: 100%; border: 5px solid #00a2e8; background: #f0f0f0; overflow: hidden; }
    .title { display: flex; align-items: center; flex: none; gap: 4px; height: 25px; padding: 0 15px 4px 6px; background: #fff; color: #8f8f8f; font: 11px/18px "Noto Sans", sans-serif; }
    .title h1 { flex: 1; margin: 0; font: inherit; }
    .title button { width: 41px; }
    .title button:last-child { width: 11px; margin-left: 16px; }
    nav { display: flex; flex: none; gap: 15px; height: 20px; padding: 0 8px; border-bottom: 1px solid #d5d5d5; background: #efefef; color: #8c8c8c; font: 11px/19px "Noto Sans", sans-serif; }
    nav a { color: inherit; text-decoration: none; }
    tool-bar { flex: none; height: 39px; }
    tool-bar:last-of-type { height: 38px; }
    main { display: flex; flex: 1; min-height: 0; gap: 6px; }
    side-dock { flex: 0 0 390px; }
    map-view { flex: 1; margin-top: 1px; }
    footer { display: flex; align-items: center; flex: none; height: 24px; padding: 3px 2px 0; font: 11px/14px Roboto, sans-serif; color: #111; }
    .find { position: relative; display: flex; align-items: center; width: 199px; margin-right: auto; }
    .find .ico { position: absolute; left: 8px; }
    .find .text { width: 100%; padding-left: 27px; }
    .find .text::placeholder { color: #777; opacity: 1; }
    .cell { display: flex; align-items: center; gap: 4px; margin-left: 8px; }
    .crs { margin-left: 18px; }
    .xy { width: 91px; text-align: center; }
    .scale { width: 61px; border-radius: 2px 0 0 2px; }
    .zoom { width: 74px; border-radius: 2px 0 0 2px; }
    .turn { width: 70px; margin-left: 4px; border-radius: 2px 0 0 2px; }
    .spin, .more { display: grid; place-items: center; height: 22px; width: 15px; margin-left: -5px; border: 1px solid #a9a9a9; border-radius: 0 2px 2px 0; background: #fafafa; }
    .more { width: 21px; color: #555; }
    .bubble { margin: 0 25px 0 18px; }
    wms-dialog { position: absolute; left: 286px; top: 216px; width: 549px; }
    .arrow { position: absolute; left: 252px; }
    .arrow.to-form { top: 300px; }
    .arrow.to-list { top: 671px; }
  `];
  render() {
    return html`<div class="window">
      <header class="title">${icon("logo", 17)}<h1>*Projekt bez nazwy — QGIS [GŁÓWNY URZĄD GEODEZJI I KARTOGRAFII]</h1>
        <button aria-label="Minimalizuj"><svg class="ico" width="10" height="10" viewBox="0 0 10 10"><path d="M0 5.500h10" stroke="#8c8c8c"/></svg></button>
        <button aria-label="Maksymalizuj"><svg class="ico" width="10" height="10" viewBox="0 0 10 10"><path d="M.5.5h9v9h-9z" fill="none" stroke="#8c8c8c"/></svg></button>
        <button aria-label="Zamknij"><svg class="ico" width="10" height="10" viewBox="0 0 10 10"><path d="M0 0l10 10M10 0L0 10" stroke="#8c8c8c"/></svg></button>
      </header>
      <nav>${MENU.map((m) => {
        const at = m.indexOf("_");
        return html`<a href="#">${at < 0 ? m : html`${m.slice(0, at)}<u>${m[at + 1]}</u>${m.slice(at + 2)}`}</a>`;
      })}</nav>
      ${BARS.map((b) => html`<tool-bar .items=${b}></tool-bar>`)}
      <main><side-dock></side-dock><map-view></map-view></main>
      <footer>
        <span class="find"><input class="text" aria-label="Szukaj" placeholder="Szukana fraza (Ctrl+K)" />${icon("find", 13)}</span>
        <span class="cell"><label for="xy">Współrzędne</label><input id="xy" class="text xy" .value=${"684070,506428"} />${icon("mouse", 16)}</span>
        <span class="cell"><label for="scale">Skala</label><input id="scale" class="text scale" .value=${"1:13213"} /><button class="more" aria-label="Lista skal">${caretDown}</button></span>
        <span class="cell">${icon("lock", 15)}</span>
        <span class="cell"><label for="zoom">Powiększenie</label><input id="zoom" class="text zoom" .value=${"100%"} />${spin}</span>
        <span class="cell"><label for="turn">Kąt obrotu</label><input id="turn" class="text turn" .value=${"0,0 °"} />${spin}</span>
        <span class="cell"><input id="render" class="check" type="checkbox" checked /><label for="render">Renderuj</label></span>
        <span class="cell crs">${icon("crs", 15)}EPSG:2180</span>
        <button class="bubble" aria-label="Komunikaty">${icon("bubble", 16)}</button>
      </footer>
      <wms-dialog></wms-dialog>
      <svg class="arrow to-form" width="58" height="24" viewBox="0 0 58 24"><path d="M3 12h52M45 2.500 55 12l-10 9.500" fill="none" stroke="#d9588f" stroke-width="3.500" stroke-linecap="round"/></svg>
      <svg class="arrow to-list" width="58" height="24" viewBox="0 0 58 24"><path d="M55 12H3M13 2.500 3 12l10 9.500" fill="none" stroke="#d9588f" stroke-width="3.500" stroke-linecap="round"/></svg>
    </div>`;
  }
}
